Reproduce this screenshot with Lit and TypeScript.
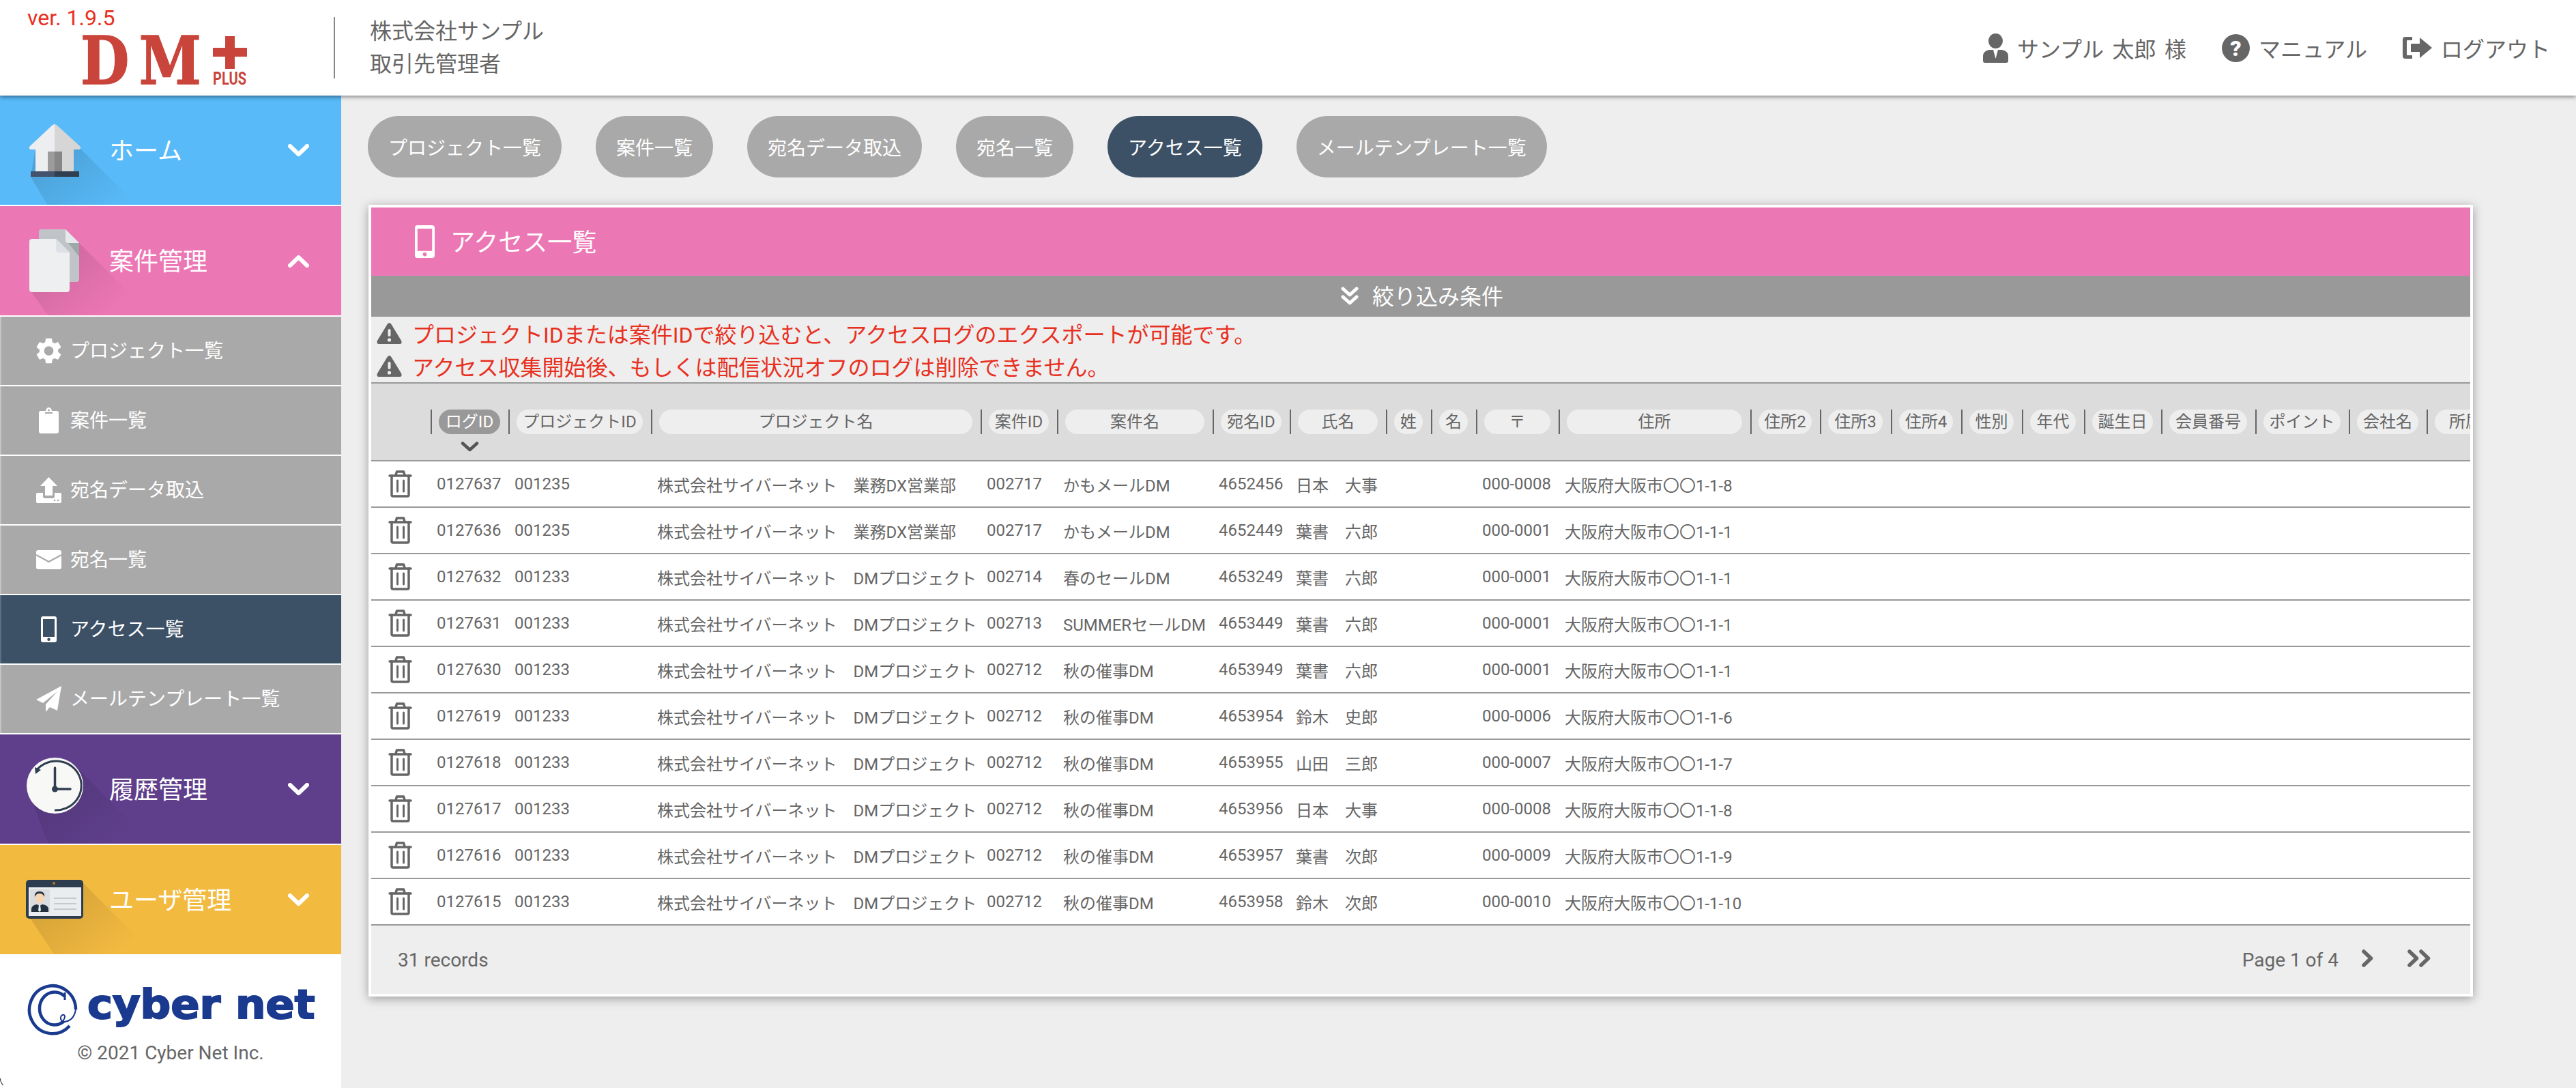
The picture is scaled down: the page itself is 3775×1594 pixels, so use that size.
import { css, html, LitElement, svg } from 'lit';
import { customElement } from 'lit/decorators.js';

const COLS: [string, number][] = [
  ['', 87], ['ログID', 114], ['プロジェクトID', 209], ['プロジェクト名', 483], ['案件ID', 112], ['案件名', 228],
  ['宛名ID', 113], ['氏名', 141], ['姓', 66], ['名', 66], ['〒', 121], ['住所', 281], ['住所2', 102], ['住所3', 104],
  ['住所4', 103], ['性別', 89], ['年代', 91], ['誕生日', 113], ['会員番号', 138], ['ポイント', 137], ['会社名', 114], ['所属', 114],
];
const GRID = COLS.map((c) => `${c[1]}px`).join(' ');

const CO = '株式会社サイバーネット　';
const ROWS = [
  ['0127637', '001235', CO + '業務DX営業部', '002717', 'かもメールDM', '4652456', '日本　大事', '000-0008', '1-1-8'],
  ['0127636', '001235', CO + '業務DX営業部', '002717', 'かもメールDM', '4652449', '葉書　六郎', '000-0001', '1-1-1'],
  ['0127632', '001233', CO + 'DMプロジェクト', '002714', '春のセールDM', '4653249', '葉書　六郎', '000-0001', '1-1-1'],
  ['0127631', '001233', CO + 'DMプロジェクト', '002713', 'SUMMERセールDM', '4653449', '葉書　六郎', '000-0001', '1-1-1'],
  ['0127630', '001233', CO + 'DMプロジェクト', '002712', '秋の催事DM', '4653949', '葉書　六郎', '000-0001', '1-1-1'],
  ['0127619', '001233', CO + 'DMプロジェクト', '002712', '秋の催事DM', '4653954', '鈴木　史郎', '000-0006', '1-1-6'],
  ['0127618', '001233', CO + 'DMプロジェクト', '002712', '秋の催事DM', '4653955', '山田　三郎', '000-0007', '1-1-7'],
  ['0127617', '001233', CO + 'DMプロジェクト', '002712', '秋の催事DM', '4653956', '日本　大事', '000-0008', '1-1-8'],
  ['0127616', '001233', CO + 'DMプロジェクト', '002712', '秋の催事DM', '4653957', '葉書　次郎', '000-0009', '1-1-9'],
  ['0127615', '001233', CO + 'DMプロジェクト', '002712', '秋の催事DM', '4653958', '鈴木　次郎', '000-0010', '1-1-10'],
];

const PILLS = ['プロジェクト一覧', '案件一覧', '宛名データ取込', '宛名一覧', 'アクセス一覧', 'メールテンプレート一覧'];

// long shadow used behind the big sidebar icons
const longShadow = (points: string) => svg`
  <defs>
    <linearGradient id="ls" x1="0" y1="0" x2="1" y2="1">
      <stop offset="0" stop-color="#000" stop-opacity=".16"></stop>
      <stop offset=".7" stop-color="#000" stop-opacity="0"></stop>
    </linearGradient>
  </defs>
  <polygon points=${points} fill="url(#ls)"></polygon>`;

const chevron = (up = false) => html`<svg class="chev" viewBox="0 0 31 19">
  <polyline points=${up ? '3,16 15.5,4 28,16' : '3,3 15.5,15 28,3'} fill="none" stroke="#fff" stroke-width="6" stroke-linecap="round" stroke-linejoin="round"></polyline>
</svg>`;

const homeIcon = html`<svg class="big" viewBox="0 0 84 84">
  ${longShadow('80,40 180,140 150,170 60,170 7,81 14,40')}
  <path d="M42 4 Q44 4 46 6 L79 36 Q82 40 78 41 L42 41 Z" fill="#d6d6d6"></path>
  <path d="M42 4 Q40 4 38 6 L6 36 Q3 40 7 41 L42 41 Z" fill="#eceef0"></path>
  <rect x="14" y="41" width="28" height="32" fill="#eceef0"></rect>
  <rect x="42" y="41" width="28" height="32" fill="#d6d6d6"></rect>
  <rect x="32" y="44" width="10" height="29" fill="#9c9c9c"></rect>
  <rect x="42" y="44" width="11" height="29" fill="#868686"></rect>
  <rect x="7" y="73" width="35" height="8" fill="#43536b"></rect>
  <rect x="42" y="73" width="36" height="8" fill="#303e52"></rect>
</svg>`;

const docIcon = html`<svg class="big" viewBox="0 0 84 84">
  ${longShadow('78,16 180,118 150,160 60,160 5,84 60,30')}
  <path d="M22 -4 H58 L78 16 V69 Q78 73 74 73 H22 Q19 73 19 69 V0 Q19 -4 22 -4 Z" fill="#c0c4c8"></path>
  <path d="M58 -4 L78 16 H62 Q58 16 58 12 Z" fill="#e6e8eb"></path>
  <path d="M62 16 H78 V36 Z" fill="#9fa8a8"></path>
  <path d="M9 10 H44 L64 30 V84 Q64 88 60 88 H9 Q5 88 5 84 V14 Q5 10 9 10 Z" fill="#eeeff1"></path>
  <path d="M44 10 L64 30 H49 Q44 30 44 25 Z" fill="#dde0e5"></path>
</svg>`;

const clockIcon = html`<svg class="big" viewBox="0 0 84 84">
  ${longShadow('72,8 190,126 150,170 50,170 10,62')}
  <ellipse cx="42.5" cy="37" rx="41.5" ry="41" fill="#f8f8f6"></ellipse>
  <path d="M15 15 A37 36 0 1 1 42 73" fill="none" stroke="#2f3e50" stroke-width="3"></path>
  <polygon points="13,10 22,14 14,20" fill="#2f3e50"></polygon>
  <path d="M42.5 11 V42 H65" fill="none" stroke="#2f3e50" stroke-width="3.5" stroke-linecap="round"></path>
  <circle cx="42.5" cy="42" r="4.5" fill="#2f3e50"></circle>
</svg>`;

const cardIcon = html`<svg class="big" viewBox="0 0 84 84">
  ${longShadow('80,14 190,124 150,170 60,150 4,66')}
  <rect x="0" y="13" width="84" height="57" rx="5" fill="#2e3c50"></rect>
  <rect x="4" y="24" width="77" height="42" fill="#e9edf0"></rect>
  <circle cx="41" cy="18" r="2" fill="#b87a20"></circle>
  <rect x="6" y="27" width="29" height="33" fill="#d9dde0"></rect>
  <path d="M8 60 V55 Q9 50 16 49 L20 51 L24 49 Q32 50 33 55 V60 Z" fill="#22303f"></path>
  <ellipse cx="20" cy="39" rx="6.5" ry="8.5" fill="#f6d6b2"></ellipse>
  <path d="M13 38 Q12 30 20 30 Q28 30 27 38 Q25 33 20 33 Q15 33 13 38 Z" fill="#22303f"></path>
  <path d="M19 50 H21 L22 58 L20 60 L18 58 Z" fill="#e9edf0"></path>
  <g stroke="#b9bcbf" stroke-width="1.5"><line x1="41" x2="74" y1="40" y2="40"></line><line x1="41" x2="74" y1="48" y2="48"></line><line x1="41" x2="74" y1="56" y2="56"></line></g>
</svg>`;

const gearIcon = html`<svg class="sub" viewBox="2.5 2 19 20"><path fill="#fff" d="M19.14 12.94c.04-.3.06-.61.06-.94 0-.32-.02-.64-.07-.94l2.03-1.58c.18-.14.23-.41.12-.61l-1.92-3.32c-.12-.22-.37-.29-.59-.22l-2.39.96c-.5-.38-1.03-.7-1.62-.94l-.36-2.54c-.04-.24-.24-.41-.48-.41h-3.84c-.24 0-.43.17-.47.41l-.36 2.54c-.59.24-1.13.57-1.62.94l-2.39-.96c-.22-.08-.47 0-.59.22L2.74 8.87c-.12.21-.08.47.12.61l2.03 1.58c-.05.3-.09.63-.09.94s.02.64.07.94l-2.03 1.58c-.18.14-.23.41-.12.61l1.92 3.32c.12.22.37.29.59.22l2.39-.96c.5.38 1.03.7 1.62.94l.36 2.54c.05.24.24.41.48.41h3.84c.24 0 .44-.17.47-.41l.36-2.54c.59-.24 1.13-.56 1.62-.94l2.39.96c.22.08.47 0 .59-.22l1.92-3.32c.12-.22.07-.47-.12-.61l-2.01-1.58zM12 15.6c-1.98 0-3.6-1.62-3.6-3.6s1.62-3.6 3.6-3.6 3.6 1.62 3.6 3.6-1.62 3.6-3.6 3.6z"></path></svg>`;
const clipIcon = html`<svg class="sub" viewBox="0 0 37 38">
  <path fill="#fff" d="M7 5 H14 Q15 0 18.5 0 Q22 0 23 5 H30 Q33 5 33 8 V35 Q33 38 30 38 H7 Q4 38 4 35 V8 Q4 5 7 5 Z"></path>
  <rect x="13" y="7" width="11" height="2" fill="#a9a9a9"></rect><circle cx="18.5" cy="4" r="1.5" fill="#a9a9a9"></circle>
</svg>`;
const uploadIcon = html`<svg class="sub" viewBox="0 0 37 38">
  <path fill="#fff" d="M18.5 0 L31 13 H24 V27 H13 V13 H6 Z"></path>
  <path fill="#fff" d="M2 23 H10 V28 Q10 31 13 31 H24 Q27 31 27 28 V23 H35 Q37 23 37 25 V36 Q37 38 35 38 H2 Q0 38 0 36 V25 Q0 23 2 23 Z"></path>
  <circle cx="27" cy="34" r="1.3" fill="#a9a9a9"></circle><circle cx="32" cy="34" r="1.3" fill="#a9a9a9"></circle>
</svg>`;
const mailIcon = html`<svg class="sub" viewBox="0 0 37 28">
  <rect width="37" height="28" rx="3" fill="#fff"></rect>
  <polyline points="0,7 18.5,17 37,7" fill="none" stroke="#a9a9a9" stroke-width="2"></polyline>
</svg>`;
const phonePath = 'M3 0 H20 Q23 0 23 3 V35 Q23 38 20 38 H3 Q0 38 0 35 V3 Q0 0 3 0 Z M3 4 V30 H20 V4 Z M11.5 31.5 A2.2 2.2 0 1 0 11.51 36 A2.2 2.2 0 1 0 11.5 31.5 Z';
const phoneIcon = html`<svg class="sub" viewBox="-7 0 37 38"><path fill="#fff" fill-rule="evenodd" d=${phonePath}></path></svg>`;
const planeIcon = html`<svg class="sub" viewBox="0 0 37 38"><path fill="#fff" d="M37 0 L31 36 L20 31 L14 38 V27 L31 8 L10 25 L0 20 Z"></path></svg>`;

const trashIcon = html`<svg class="trash" viewBox="0 0 35 40">
  <g fill="none" stroke="#666" stroke-width="3.5" stroke-linecap="round" stroke-linejoin="round">
    <path d="M2 8 H33"></path>
    <path d="M11 7 L12.5 2 H22.5 L24 7"></path>
    <path d="M5 8 V36 Q5 38 7 38 H28 Q30 38 30 36 V8"></path>
    <path d="M13.5 15 V31 M22.5 15 V31" stroke-width="3"></path>
  </g>
</svg>`;
const warnIcon = html`<svg class="warn" viewBox="0 0 37 31">
  <path fill="#666" d="M18.5 0 Q20.5 0 22 3 L36 26 Q38 31 33 31 H4 Q-1 31 1 26 L15 3 Q16.5 0 18.5 0 Z"></path>
  <rect x="16.5" y="9" width="4" height="11" rx="2" fill="#eee"></rect><circle cx="18.5" cy="25" r="2.6" fill="#eee"></circle>
</svg>`;

@customElement('app-root')
export default class AppRoot extends LitElement {
  static styles = css`
    :host {
      display: block;
      height: 1594px;
      overflow: hidden;
      position: relative;
      background: #eee;
      color: #666;
      font-family: Roboto, "Noto Sans CJK JP", sans-serif;
    }

    /* Noto sits a little lower than the original's font */
    .lbl {
      padding-bottom: 4px;
    }

    .top {
      position: relative;
      z-index: 2;
      display: flex;
      align-items: center;
      height: 140px;
      background: #fff;
      box-shadow: 0 2px 6px rgba(0, 0, 0, .45);
    }
    .brand {
      width: 489px;
      height: 140px;
      padding: 8px 0 0 40px;
      box-sizing: border-box;
      flex: none;
    }
    .ver {
      font-size: 32px;
      line-height: 36px;
      color: #e8301f;
    }
    .logo {
      display: flex;
      margin: 9px 0 0 78px;
      color: #c9443a;
    }
    .logo__dm {
      width: 194px;
      height: 72px;
      font: 700 98px/72px "DejaVu Serif", serif;
      letter-spacing: 17px;
      -webkit-text-stroke: 1.5px #c9443a;
      transform: scaleX(.84);
      transform-origin: left center;
      white-space: nowrap;
    }
    .logo__plus {
      display: flex;
      flex-direction: column;
      align-items: center;
      width: 50px;
    }
    .logo__plus svg {
      width: 50px;
      height: 48px;
    }
    .logo__plus span {
      font: 700 25px/18px Roboto, sans-serif;
      margin-top: 6px;
      transform: scaleX(.8);
      white-space: nowrap;
    }
    .org {
      border-left: 2px solid #888;
      height: 90px;
      padding-left: 51px;
      font-size: 32px;
      line-height: 48px;
      display: flex;
      flex-direction: column;
      justify-content: center;
    }
    .util {
      display: flex;
      align-items: center;
      gap: 52px;
      margin-left: auto;
      padding-right: 38px;
      font-size: 32px;
    }
    .util__item {
      display: flex;
      align-items: center;
      gap: 13px;
      word-spacing: 4.5px;
    }

    .body {
      display: flex;
      height: 1454px;
    }
    .side {
      width: 500px;
      flex: none;
      background: #fff;
      display: flex;
      flex-direction: column;
      gap: 2px;
    }
    .sec {
      display: flex;
      align-items: center;
      gap: 38px;
      height: 160px;
      flex: none;
      padding: 0 47px 0 38px;
      overflow: hidden;
      color: #fff;
      font-size: 36px;
    }
    .big {
      width: 84px;
      height: 84px;
      flex: none;
      overflow: visible;
    }
    .chev {
      width: 31px;
      height: 19px;
      margin-left: auto;
    }
    .sec--home { background: #58baf8; }
    .sec--case { background: #ec77b5; }
    .sec--hist { background: #5f3f8c; }
    .sec--user { background: #f3ba40; }
    .item {
      display: flex;
      align-items: center;
      gap: 13px;
      height: 100px;
      flex: none;
      padding-left: 51px;
      border-left: 2px solid #c4c4c4;
      background: #a9a9a9;
      color: #fff;
      font-size: 28px;
    }
    .item--on {
      background: #3c5066;
      border-left-color: #5d6f82;
    }
    .sub {
      width: 37px;
      height: 38px;
      flex: none;
    }
    .corp {
      display: flex;
      flex-direction: column;
      align-items: center;
      padding-top: 41px;
    }
    .corp__logo {
      display: flex;
      align-items: flex-start;
      gap: 14px;
      color: #1a3a8f;
      height: 84px;
    }
    .corp__mark {
      width: 74px;
      height: 76px;
    }
    .corp__name {
      width: 333px;
      font: 700 58px/58px "DejaVu Sans", sans-serif;
      -webkit-text-stroke: 2px #1a3a8f;
      transform: scaleX(1.075);
      transform-origin: left center;
      margin-top: 2px;
      white-space: nowrap;
    }
    .corp__copy {
      font-size: 28px;
      line-height: 36px;
    }

    .main {
      flex: 1;
      min-width: 0;
      padding: 30px 151px 0 40px;
    }
    .pills {
      display: flex;
      gap: 50px;
      margin: 0 0 40px -1px;
    }
    .pill {
      display: flex;
      align-items: center;
      height: 90px;
      padding: 0 30px;
      border-radius: 45px;
      background: #a9a9a9;
      color: #fff;
      font-size: 28px;
    }
    .pill--on { background: #3c5066; }

    .card {
      height: 1160px;
      box-sizing: border-box;
      border: 4px solid #fff;
      box-shadow: 0 3px 14px rgba(0, 0, 0, .35);
      background: #fff;
      display: flex;
      flex-direction: column;
    }
    .title {
      display: flex;
      align-items: center;
      gap: 23px;
      height: 100px;
      flex: none;
      padding-left: 64px;
      background: #ec77b5;
      color: #fff;
      font-size: 36px;
    }
    .title svg {
      width: 29px;
      height: 48px;
    }
    .filter {
      display: flex;
      align-items: center;
      justify-content: center;
      gap: 20px;
      height: 60px;
      flex: none;
      padding-left: 4px;
      background: #999;
      color: #fff;
      font-size: 32px;
    }
    .filter svg {
      width: 26px;
      height: 28px;
    }
    .notes {
      flex: none;
      background: #eee;
      color: #e8301f;
      font-size: 32px;
    }
    .note {
      display: flex;
      align-items: center;
      gap: 15px;
      height: 48px;
      padding-left: 8px;
    }
    .warn {
      width: 37px;
      height: 31px;
      flex: none;
    }

    .table {
      overflow: hidden;
      flex: none;
    }
    .thead {
      display: grid;
      padding-top: 38px;
      height: 74px;
      align-items: start;
      background: #dcdcdc;
      border-top: 2px solid #999;
      border-bottom: 2px solid #999;
      font-size: 24px;
    }
    .th {
      position: relative;
      height: 36px;
      box-sizing: border-box;
      padding: 0 12px 0 10px;
      border-left: 2px solid #666;
    }
    .th:first-child { border-left: 0; }
    .th span {
      display: block;
      height: 36px;
      line-height: 36px;
      border-radius: 18px;
      background: #eee;
      text-align: center;
      white-space: nowrap;
      overflow: hidden;
    }
    .th--sort span {
      background: #999;
      color: #fff;
    }
    .th svg {
      position: absolute;
      left: 42px;
      top: 47px;
      width: 27px;
      height: 15px;
    }
    .tr {
      display: grid;
      align-items: center;
      height: 68px;
      box-sizing: border-box;
      border-bottom: 2px solid #999;
      font-size: 24px;
      white-space: nowrap;
    }
    .td {
      padding-left: 9px;
    }
    .trash {
      width: 35px;
      height: 40px;
      display: block;
      margin-left: 25px;
    }

    .foot {
      display: flex;
      align-items: center;
      flex: 1;
      padding: 0 58px 0 39px;
      background: #eee;
      font-size: 28px;
    }
    .pager {
      display: flex;
      align-items: center;
      margin-left: auto;
    }
    .pager svg {
      height: 26px;
      margin-top: -4px;
    }
    .pager__next {
      width: 17px;
      margin: 0 50px 0 34px;
    }
    .pager__last {
      width: 34px;
    }

    .corner {
      position: absolute;
      left: 0;
      bottom: 0;
      width: 14px;
      height: 14px;
      border-left: 1px solid #222;
      border-bottom: 1px solid transparent;
      border-bottom-left-radius: 14px;
      box-sizing: border-box;
    }
  `;

  private renderHead() {
    return html`<div class="thead" style="grid-template-columns:${GRID}">
      ${COLS.map((c, i) => (i === 0
        ? html`<div class="th"></div>`
        : html`<div class="th ${i === 1 ? 'th--sort' : ''}"><span>${c[0]}</span>
            ${i === 1 ? html`<svg viewBox="0 0 27 15"><polyline points="3,2.5 13.5,12 24,2.5" fill="none" stroke="#555" stroke-width="4.5" stroke-linecap="round" stroke-linejoin="round"></polyline></svg>` : ''}
          </div>`))}
    </div>`;
  }

  private renderRow(r: string[]) {
    const cells = [r[0], r[1], r[2], r[3], r[4], r[5], r[6], '', '', r[7], `大阪府大阪市〇〇${r[8]}`];
    return html`<div class="tr" style="grid-template-columns:${GRID}">
      <div>${trashIcon}</div>
      ${cells.map((c) => html`<div class="td">${c}</div>`)}
    </div>`;
  }

  protected render() {
    return html`
      <div class="top">
        <div class="brand">
          <div class="ver">ver. 1.9.5</div>
          <div class="logo">
            <div class="logo__dm">DM</div>
            <div class="logo__plus">
              <svg viewBox="0 0 50 48"><path fill="#c9443a" d="M18 0 H32 V17 H50 V30 H32 V48 H18 V30 H0 V17 H18 Z"></path></svg>
              <span>PLUS</span>
            </div>
          </div>
        </div>
        <div class="org"><div>株式会社サンプル</div><div>取引先管理者</div></div>
        <div class="util">
          <div class="util__item">
            <svg width="37" height="43" viewBox="0 0 37 43">
              <ellipse cx="18.5" cy="11" rx="10.5" ry="11" fill="#666"></ellipse>
              <path fill="#666" d="M0 40 V33 Q0 26 9 24 L15 24 L18.5 37 L22 24 L28 24 Q37 26 37 33 V40 Q37 43 34 43 H3 Q0 43 0 40 Z"></path>
            </svg>
            <span>サンプル 太郎 様</span>
          </div>
          <div class="util__item">
            <svg width="41" height="41" viewBox="0 0 41 41">
              <circle cx="20.5" cy="20.5" r="20.5" fill="#666"></circle>
              <text x="20.5" y="32" text-anchor="middle" fill="#fff" font-family="Roboto" font-weight="900" font-size="32">?</text>
            </svg>
            <span>マニュアル</span>
          </div>
          <div class="util__item">
            <svg width="43" height="32" viewBox="0 0 43 32">
              <path fill="#666" d="M4 0 H14 V5 H7 Q6 5 6 6 V26 Q6 27 7 27 H14 V32 H4 Q0 32 0 28 V4 Q0 0 4 0 Z"></path>
              <path fill="#666" d="M12 10 H25 V1 L43 16 L25 31 V22 H12 Z"></path>
            </svg>
            <span>ログアウト</span>
          </div>
        </div>
      </div>

      <div class="body">
        <nav class="side">
          <div class="sec sec--home">${homeIcon}<span class="lbl">ホーム</span>${chevron()}</div>
          <div class="sec sec--case">${docIcon}<span class="lbl">案件管理</span>${chevron(true)}</div>
          <div class="item">${gearIcon}<span class="lbl">プロジェクト一覧</span></div>
          <div class="item">${clipIcon}<span class="lbl">案件一覧</span></div>
          <div class="item">${uploadIcon}<span class="lbl">宛名データ取込</span></div>
          <div class="item">${mailIcon}<span class="lbl">宛名一覧</span></div>
          <div class="item item--on">${phoneIcon}<span class="lbl">アクセス一覧</span></div>
          <div class="item">${planeIcon}<span class="lbl">メールテンプレート一覧</span></div>
          <div class="sec sec--hist">${clockIcon}<span class="lbl">履歴管理</span>${chevron()}</div>
          <div class="sec sec--user">${cardIcon}<span class="lbl">ユーザ管理</span>${chevron()}</div>
          <div class="corp">
            <div class="corp__logo">
              <svg class="corp__mark" viewBox="0 0 74 76">
                <g fill="none" stroke="#1a3a8f">
                  <path d="M71 38 A34 35 0 1 0 62 62" stroke-width="4.5"></path>
                  <path d="M55 19 A22 24 0 1 0 54 55" stroke-width="4.5"></path>
                  <path d="M71 38 Q68 56 52 56 Q47 52 50 47 Q54 44 55 48 Q55 54 47 58" stroke-width="2"></path>
                  <path d="M55 13 V24" stroke-width="3"></path>
                </g>
              </svg>
              <div class="corp__name">cyber net</div>
            </div>
            <div class="corp__copy">© 2021 Cyber Net Inc.</div>
          </div>
        </nav>

        <main class="main">
          <div class="pills">
            ${PILLS.map((p) => html`<div class="pill ${p === 'アクセス一覧' ? 'pill--on' : ''}">${p}</div>`)}
          </div>
          <section class="card">
            <div class="title">
              <svg viewBox="0 0 23 38"><path fill="#fff" fill-rule="evenodd" d=${phonePath}></path></svg>
              <span class="lbl">アクセス一覧</span>
            </div>
            <div class="filter">
              <svg viewBox="0 0 26 28"><g fill="none" stroke="#fff" stroke-width="5" stroke-linecap="round" stroke-linejoin="round"><polyline points="3,3 13,12 23,3"></polyline><polyline points="3,15 13,24 23,15"></polyline></g></svg>
              <span class="lbl">絞り込み条件</span>
            </div>
            <div class="notes">
              <div class="note">${warnIcon}プロジェクトIDまたは案件IDで絞り込むと、アクセスログのエクスポートが可能です。</div>
              <div class="note">${warnIcon}アクセス収集開始後、もしくは配信状況オフのログは削除できません。</div>
            </div>
            <div class="table">
              ${this.renderHead()}
              ${ROWS.map((r) => this.renderRow(r))}
            </div>
            <div class="foot">
              31 records
              <div class="pager">
                Page 1 of 4
                <svg class="pager__next" viewBox="0 0 17 26"><polyline points="3,3 13.5,13 3,23" fill="none" stroke="#666" stroke-width="5.5" stroke-linecap="round" stroke-linejoin="round"></polyline></svg>
                <svg class="pager__last" viewBox="0 0 34 26"><g fill="none" stroke="#666" stroke-width="5.5" stroke-linecap="round" stroke-linejoin="round"><polyline points="3,3 13.5,13 3,23"></polyline><polyline points="20,3 30.5,13 20,23"></polyline></g></svg>
              </div>
            </div>
          </section>
        </main>
      </div>
      <div class="corner"></div>
    `;
  }
}
